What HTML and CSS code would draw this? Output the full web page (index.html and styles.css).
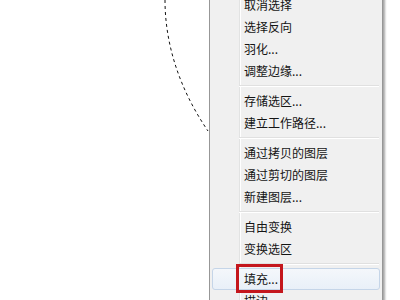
FILE: index.html
```html
<!DOCTYPE html>
<html>
<head>
<meta charset="utf-8">
<link rel="stylesheet" href="styles.css">
</head>
<body>
<div class="canvas">
  <svg class="ants" width="220" height="300" viewBox="0 0 220 300">
    <path d="M165,0 C165,45 180,90 208,131" fill="none" stroke="#111" stroke-width="1" stroke-dasharray="3 3"/>
  </svg>
  <div class="menu">
    <div class="item">取消选择</div>
    <div class="item">选择反向</div>
    <div class="item">羽化...</div>
    <div class="item">调整边缘...</div>
    <div class="sep"></div>
    <div class="item">存储选区...</div>
    <div class="item">建立工作路径...</div>
    <div class="sep"></div>
    <div class="item">通过拷贝的图层</div>
    <div class="item">通过剪切的图层</div>
    <div class="item">新建图层...</div>
    <div class="sep"></div>
    <div class="item">自由变换</div>
    <div class="item">变换选区</div>
    <div class="sep"></div>
    <div class="item hover">填充...<span class="mark"></span></div>
    <div class="item">描边...</div>
  </div>
</div>
</body>
</html>
```
FILE: styles.css
```css
html, body {
  margin: 0;
  padding: 0;
  background: #ffffff;
}
.canvas {
  position: relative;
  width: 400px;
  height: 300px;
  overflow: hidden;
  background: #ffffff;
}
.ants {
  position: absolute;
  left: 0;
  top: 0;
}
.menu {
  position: absolute;
  left: 209px;
  top: -9px;
  width: 168px;
  padding: 2px;
  background: #f0f0f0;
  border: 1px solid #979797;
  box-shadow: 2px 2px 2px rgba(0, 0, 0, 0.35);
  font-family: "Noto Sans CJK SC", "Microsoft YaHei", sans-serif;
  font-size: 12px;
  color: #141414;
}
.menu::before {
  content: "";
  position: absolute;
  left: 29px;
  top: 0;
  bottom: 0;
  width: 1px;
  background: #e2e3e3;
  border-right: 1px solid #ffffff;
}
.item {
  position: relative;
  height: 22px;
  padding-left: 31px;
  box-sizing: border-box;
  border: 1px solid transparent;
  border-radius: 3px;
  line-height: 20px;
}
.item.hover {
  background: linear-gradient(#f4f7fb, #e9f0f8);
  border-color: #c5d5e8;
  z-index: 1;
}
.sep {
  height: 8px;
  position: relative;
  margin-left: 27px;
  margin-right: 1px;
}
.sep::after {
  content: "";
  position: absolute;
  left: 0;
  right: 0;
  top: 3px;
  height: 1px;
  background: #e0e0e0;
  border-bottom: 1px solid #ffffff;
}
.mark {
  position: absolute;
  left: 23px;
  top: -5px;
  width: 41px;
  height: 23px;
  border: 3px solid #c4161c;
}
```
